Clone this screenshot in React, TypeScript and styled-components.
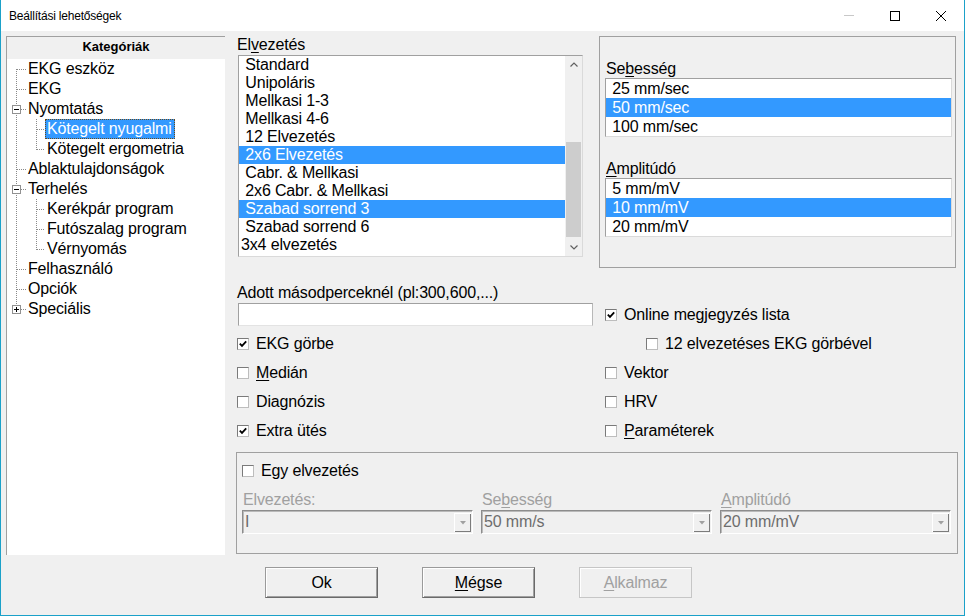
import React from 'react';
import styled, { createGlobalStyle } from 'styled-components';

const GlobalStyle = createGlobalStyle`
  html, body { margin: 0; padding: 0; background: #f0f0f0; }
  * { box-sizing: border-box; }
`;

const Window = styled.div`
  width: 965px;
  height: 616px;
  border: 1px solid #1ba1c9;
  border-top: none;
  background: #f0f0f0;
  display: flex;
  flex-direction: column;
  font-family: "Liberation Sans", Arial, sans-serif;
  font-size: 16px;
  letter-spacing: -0.15px;
  color: #000;
  overflow: hidden;
`;

const TitleBar = styled.div`
  height: 31px;
  flex: none;
  background: #fff;
  display: flex;
  align-items: center;
`;

const TitleText = styled.div`
  flex: 1;
  padding-left: 8px;
  font-size: 12px;
  letter-spacing: -0.2px;
  color: #000;
`;

const TitleButton = styled.div`
  width: 46px;
  height: 31px;
  display: flex;
  align-items: center;
  justify-content: center;
`;

const Body = styled.div`
  flex: 1;
  display: flex;
  flex-direction: column;
  padding: 5px 0 0 5px;
`;

const MainRow = styled.div`
  display: flex;
  align-items: flex-start;
`;

const TreePanel = styled.div`
  width: 219px;
  height: 519px;
  flex: none;
  background: #fff;
  border-left: 1px solid #a0a0a0;
  border-top: 1px solid #a0a0a0;
`;

const TreeHeader = styled.div`
  height: 22px;
  line-height: 20px;
  background: #f0f0f0;
  border-bottom: 1px solid #f0f0f0;
  text-align: center;
  font-weight: bold;
  font-size: 13px;
  letter-spacing: 0;
`;

const TreeRow = styled.div`
  height: 20px;
  display: flex;
  align-items: stretch;
`;

const GutterSvg = styled.svg`
  flex: none;
  display: block;
`;

const TreeLabel = styled.span<{ $selected?: boolean }>`
  height: 20px;
  line-height: 18px;
  padding: 0 2px 0 1px;
  white-space: nowrap;
  border: 1px ${p => (p.$selected ? 'dotted #6b4a1a' : 'solid transparent')};
  background: ${p => (p.$selected ? '#3399ff' : 'transparent')};
  color: ${p => (p.$selected ? '#fff' : '#000')};
`;

const Content = styled.div`
  margin-left: 11px;
  width: 722px;
  display: flex;
  flex-direction: column;
`;

const TopSection = styled.div`
  display: grid;
  grid-template-columns: 357px 357px;
  column-gap: 6px;
  height: 232px;
`;

const LeadColumn = styled.div`
  display: flex;
  flex-direction: column;
`;

const FieldLabel = styled.div<{ $disabled?: boolean }>`
  height: 18px;
  line-height: 18px;
  padding-left: 1px;
  white-space: nowrap;
  color: ${p => (p.$disabled ? '#a0a0a0' : '#000')};
`;

const U = styled.span`
  text-decoration: underline;
  text-underline-offset: 2px;
`;

const ListBox = styled.div<{ $w: number; $h: number; $ml?: number; $mt?: number }>`
  width: ${p => p.$w}px;
  height: ${p => p.$h}px;
  margin-left: ${p => p.$ml ?? 0}px;
  margin-top: ${p => p.$mt ?? 0}px;
  background: #fff;
  border: 1px solid;
  border-color: #a0a0a0 #dadada #dadada #a0a0a0;
  display: flex;
`;

const ListItems = styled.div`
  flex: 1;
  display: flex;
  flex-direction: column;
`;

const ListRow = styled.div<{ $h: number; $selected?: boolean }>`
  height: ${p => p.$h}px;
  line-height: ${p => p.$h}px;
  padding-left: 2px;
  white-space: pre;
  background: ${p => (p.$selected ? '#3399ff' : 'transparent')};
  color: ${p => (p.$selected ? '#fff' : '#000')};
`;

const ScrollBar = styled.div`
  width: 17px;
  flex: none;
  display: flex;
  flex-direction: column;
  background: #f0f0f0;
`;

const ScrollArrow = styled.div`
  height: 17px;
  display: flex;
  align-items: center;
  justify-content: center;
`;

const ScrollTrack = styled.div`
  flex: 1;
  display: flex;
  flex-direction: column;
  justify-content: flex-end;
  padding: 0 1px 2px 1px;
`;

const Thumb = styled.div`
  height: 95px;
  background: #cdcdcd;
`;

const GroupBox = styled.div`
  border: 1px solid #a0a0a0;
  display: flex;
  flex-direction: column;
`;

const RightGroup = styled(GroupBox)`
  height: 232px;
  padding: 23px 0 0 5px;
`;

const GroupGap = styled.div`
  height: 23px;
`;

const MidSection = styled.div`
  display: grid;
  grid-template-columns: 363px 1fr;
  padding-top: 16px;
`;

const MidLeft = styled.div`
  display: flex;
  flex-direction: column;
`;

const MidRight = styled.div`
  display: flex;
  flex-direction: column;
  padding-top: 16px;
  padding-left: 6px;
`;

const TextInput = styled.div`
  margin: 1px 0 3px 2px;
  width: 355px;
  height: 23px;
  background: #fff;
  border: 1px solid;
  border-color: #a0a0a0 #b8b8b8 #e3e3e3 #a0a0a0;
`;

const CheckRow = styled.div<{ $indent?: number; $h?: number }>`
  height: ${p => p.$h ?? 29}px;
  display: flex;
  align-items: center;
  gap: 7px;
  padding-left: ${p => p.$indent ?? 0}px;
  white-space: nowrap;
  line-height: 18px;
`;

const Box = styled.div`
  width: 12px;
  height: 12px;
  flex: none;
  background: #fff;
  border: 1px solid;
  border-color: #7a7a7a #bdbdbd #bdbdbd #7a7a7a;
  display: flex;
  align-items: center;
  justify-content: center;
`;

const BottomGroup = styled(GroupBox)`
  margin-top: 7px;
  height: 102px;
  padding: 9px 6px 0 5px;
`;

const ComboGrid = styled.div`
  margin-top: 11px;
  display: grid;
  grid-template-columns: repeat(3, 231px);
  column-gap: 8px;
`;

const ComboCol = styled.div`
  display: flex;
  flex-direction: column;
  gap: 1px;
`;

const Combo = styled.div`
  height: 24px;
  display: flex;
  border: 1px solid;
  border-color: #8c8c8c #ffffff #ffffff #8c8c8c;
  box-shadow: inset 1px 1px 0 #b9b9b9;
  background: #f0f0f0;
`;

const ComboText = styled.div`
  flex: 1;
  padding-left: 2px;
  line-height: 22px;
  color: #6d6d6d;
  white-space: nowrap;
`;

const DropBtn = styled.div`
  width: 17px;
  margin: 2px 1px 1px 0;
  background: #f0f0f0;
  box-shadow: inset 1px 1px 0 #ffffff, inset -1px -1px 0 #7c7c7c;
  display: flex;
  align-items: center;
  justify-content: center;
`;

const ButtonRow = styled.div`
  margin-top: 12px;
  padding-left: 259px;
  display: flex;
  gap: 44px;
`;

const Button = styled.div<{ $disabled?: boolean }>`
  width: 113px;
  height: 31px;
  display: flex;
  align-items: center;
  justify-content: center;
  background: #f0f0f0;
  border: 1px solid;
  border-color: ${p => (p.$disabled ? '#c6c6c6' : '#9a9a9a #6a6a6a #6a6a6a #9a9a9a')};
  box-shadow: ${p => (p.$disabled ? 'inset 1px 1px 0 #fff' : 'inset 1px 1px 0 #fff, inset -1px -1px 0 #a0a0a0')};
  color: ${p => (p.$disabled ? '#a0a0a0' : '#000')};
`;

type GKind = 'first' | 'tee' | 'ell' | 'pipe';

const Gutter: React.FC<{ kind: GKind; box?: 'minus' | 'plus'; lx?: number }> = ({ kind, box, lx = 9 }) => {
  const x = lx + 0.5;
  const top = kind === 'first' ? 10 : 0;
  const bottom = kind === 'ell' ? 11 : 20;
  const dots = '#8a8a8a';
  return (
    <GutterSvg width={19} height={20} viewBox="0 0 19 20" shapeRendering="crispEdges">
      <line x1={x} y1={top} x2={x} y2={bottom} stroke={dots} strokeDasharray="1 1" />
      {kind !== 'pipe' && (
        <line x1={lx + 1} y1={10.5} x2={19} y2={10.5} stroke={dots} strokeDasharray="1 1" />
      )}
      {box && (
        <>
          <rect x={lx - 3.5} y={6.5} width={8} height={8} fill="#fff" stroke="#919191" />
          <line x1={lx - 2} y1={10.5} x2={lx + 3} y2={10.5} stroke="#000" />
          {box === 'plus' && <line x1={x} y1={8} x2={x} y2={13} stroke="#000" />}
        </>
      )}
    </GutterSvg>
  );
};

type TreeItem = { label: string; g: [GKind, ('minus' | 'plus')?][]; selected?: boolean };

const tree: TreeItem[] = [
  { label: 'EKG eszköz', g: [['first']] },
  { label: 'EKG', g: [['tee']] },
  { label: 'Nyomtatás', g: [['tee', 'minus']] },
  { label: 'Kötegelt nyugalmi', g: [['pipe'], ['tee']], selected: true },
  { label: 'Kötegelt ergometria', g: [['pipe'], ['ell']] },
  { label: 'Ablaktulajdonságok', g: [['tee']] },
  { label: 'Terhelés', g: [['tee', 'minus']] },
  { label: 'Kerékpár program', g: [['pipe'], ['tee']] },
  { label: 'Futószalag program', g: [['pipe'], ['tee']] },
  { label: 'Vérnyomás', g: [['pipe'], ['ell']] },
  { label: 'Felhasználó', g: [['tee']] },
  { label: 'Opciók', g: [['tee']] },
  { label: 'Speciális', g: [['ell', 'plus']] },
];

const leads = [
  ' Standard',
  ' Unipoláris',
  ' Mellkasi 1-3',
  ' Mellkasi 4-6',
  ' 12 Elvezetés',
  ' 2x6 Elvezetés',
  ' Cabr. & Mellkasi',
  ' 2x6 Cabr. & Mellkasi',
  ' Szabad sorrend 3',
  ' Szabad sorrend 6',
  '3x4 elvezetés',
];
const selectedLeads = [5, 8];

const Check: React.FC<{ checked?: boolean }> = ({ checked }) => (
  <Box>
    {checked && (
      <svg width="8" height="8" viewBox="0 0 8 8">
        <polyline points="0.8,3.6 3,5.9 7.2,1.4" fill="none" stroke="#000" strokeWidth="1.8" />
      </svg>
    )}
  </Box>
);

const ChevronUp = () => (
  <svg width="8" height="5" viewBox="0 0 8 5">
    <polyline points="0.5,4.5 4,1 7.5,4.5" fill="none" stroke="#606060" strokeWidth="1.2" />
  </svg>
);
const ChevronDown = () => (
  <svg width="8" height="5" viewBox="0 0 8 5">
    <polyline points="0.5,0.5 4,4 7.5,0.5" fill="none" stroke="#606060" strokeWidth="1.2" />
  </svg>
);

const Tri = () => (
  <svg width="6" height="4" viewBox="0 0 6 4">
    <polygon points="0,0 6,0 3,3.5" fill="#a0a0a0" />
  </svg>
);

export default function App() {
  return (
    <>
      <GlobalStyle />
      <Window>
        <TitleBar>
          <TitleText>Beállítási lehetőségek</TitleText>
          <TitleButton>
            <svg width="10" height="1" viewBox="0 0 10 1">
              <rect x="0" y="0" width="10" height="1" fill="#c8c8c8" />
            </svg>
          </TitleButton>
          <TitleButton>
            <svg width="10" height="10" viewBox="0 0 10 10" shapeRendering="crispEdges">
              <rect x="0.5" y="0.5" width="9" height="9" fill="none" stroke="#000" />
            </svg>
          </TitleButton>
          <TitleButton>
            <svg width="10" height="10" viewBox="0 0 10 10">
              <line x1="0" y1="0" x2="10" y2="10" stroke="#000" strokeWidth="1" />
              <line x1="10" y1="0" x2="0" y2="10" stroke="#000" strokeWidth="1" />
            </svg>
          </TitleButton>
        </TitleBar>
        <Body>
          <MainRow>
            <TreePanel>
              <TreeHeader>Kategóriák</TreeHeader>
              {tree.map(item => (
                <TreeRow key={item.label}>
                  {item.g.map(([kind, box], i) => (
                    <Gutter key={i} kind={kind} box={box} lx={i === 0 ? 9 : 10} />
                  ))}
                  <TreeLabel $selected={item.selected}>{item.label}</TreeLabel>
                </TreeRow>
              ))}
            </TreePanel>
            <Content>
              <TopSection>
                <LeadColumn>
                  <FieldLabel>
                    El<U>v</U>ezetés
                  </FieldLabel>
                  <ListBox $w={345} $h={202} $ml={2} $mt={1}>
                    <ListItems>
                      {leads.map((l, i) => (
                        <ListRow key={l} $h={18} $selected={selectedLeads.includes(i)}>
                          {l}
                        </ListRow>
                      ))}
                    </ListItems>
                    <ScrollBar>
                      <ScrollArrow>
                        <ChevronUp />
                      </ScrollArrow>
                      <ScrollTrack>
                        <Thumb />
                      </ScrollTrack>
                      <ScrollArrow>
                        <ChevronDown />
                      </ScrollArrow>
                    </ScrollBar>
                  </ListBox>
                </LeadColumn>
                <RightGroup>
                  <FieldLabel>
                    Se<U>b</U>esség
                  </FieldLabel>
                  <ListBox $w={347} $h={59}>
                    <ListItems>
                      <ListRow $h={19}> 25 mm/sec</ListRow>
                      <ListRow $h={19} $selected> 50 mm/sec</ListRow>
                      <ListRow $h={19}> 100 mm/sec</ListRow>
                    </ListItems>
                  </ListBox>
                  <GroupGap />
                  <FieldLabel>
                    <U>A</U>mplitúdó
                  </FieldLabel>
                  <ListBox $w={347} $h={59}>
                    <ListItems>
                      <ListRow $h={19}> 5 mm/mV</ListRow>
                      <ListRow $h={19} $selected> 10 mm/mV</ListRow>
                      <ListRow $h={19}> 20 mm/mV</ListRow>
                    </ListItems>
                  </ListBox>
                </RightGroup>
              </TopSection>
              <MidSection>
                <MidLeft>
                  <FieldLabel>Adott másodperceknél (pl:300,600,...)</FieldLabel>
                  <TextInput />
                  <CheckRow $indent={1}>
                    <Check checked />
                    EKG görbe
                  </CheckRow>
                  <CheckRow $indent={1}>
                    <Check />
                    <span>
                      <U>M</U>edián
                    </span>
                  </CheckRow>
                  <CheckRow $indent={1}>
                    <Check />
                    Diagnózis
                  </CheckRow>
                  <CheckRow $indent={1}>
                    <Check checked />
                    Extra ütés
                  </CheckRow>
                </MidLeft>
                <MidRight>
                  <CheckRow>
                    <Check checked />
                    Online megjegyzés lista
                  </CheckRow>
                  <CheckRow $indent={41}>
                    <Check />
                    12 elvezetéses EKG görbével
                  </CheckRow>
                  <CheckRow>
                    <Check />
                    Vektor
                  </CheckRow>
                  <CheckRow>
                    <Check />
                    HRV
                  </CheckRow>
                  <CheckRow>
                    <Check />
                    <span>
                      <U>P</U>araméterek
                    </span>
                  </CheckRow>
                </MidRight>
              </MidSection>
              <BottomGroup>
                <CheckRow $h={18}>
                  <Check />
                  Egy elvezetés
                </CheckRow>
                <ComboGrid>
                  <ComboCol>
                    <FieldLabel $disabled>Elvezetés:</FieldLabel>
                    <Combo>
                      <ComboText>I</ComboText>
                      <DropBtn>
                        <Tri />
                      </DropBtn>
                    </Combo>
                  </ComboCol>
                  <ComboCol>
                    <FieldLabel $disabled>
                      Se<U>b</U>esség
                    </FieldLabel>
                    <Combo>
                      <ComboText>50 mm/s</ComboText>
                      <DropBtn>
                        <Tri />
                      </DropBtn>
                    </Combo>
                  </ComboCol>
                  <ComboCol>
                    <FieldLabel $disabled>
                      <U>A</U>mplitúdó
                    </FieldLabel>
                    <Combo>
                      <ComboText>20 mm/mV</ComboText>
                      <DropBtn>
                        <Tri />
                      </DropBtn>
                    </Combo>
                  </ComboCol>
                </ComboGrid>
              </BottomGroup>
            </Content>
          </MainRow>
          <ButtonRow>
            <Button>Ok</Button>
            <Button>
              <span>
                <U>M</U>égse
              </span>
            </Button>
            <Button $disabled>
              <span>
                <U>A</U>lkalmaz
              </span>
            </Button>
          </ButtonRow>
        </Body>
      </Window>
    </>
  );
}
